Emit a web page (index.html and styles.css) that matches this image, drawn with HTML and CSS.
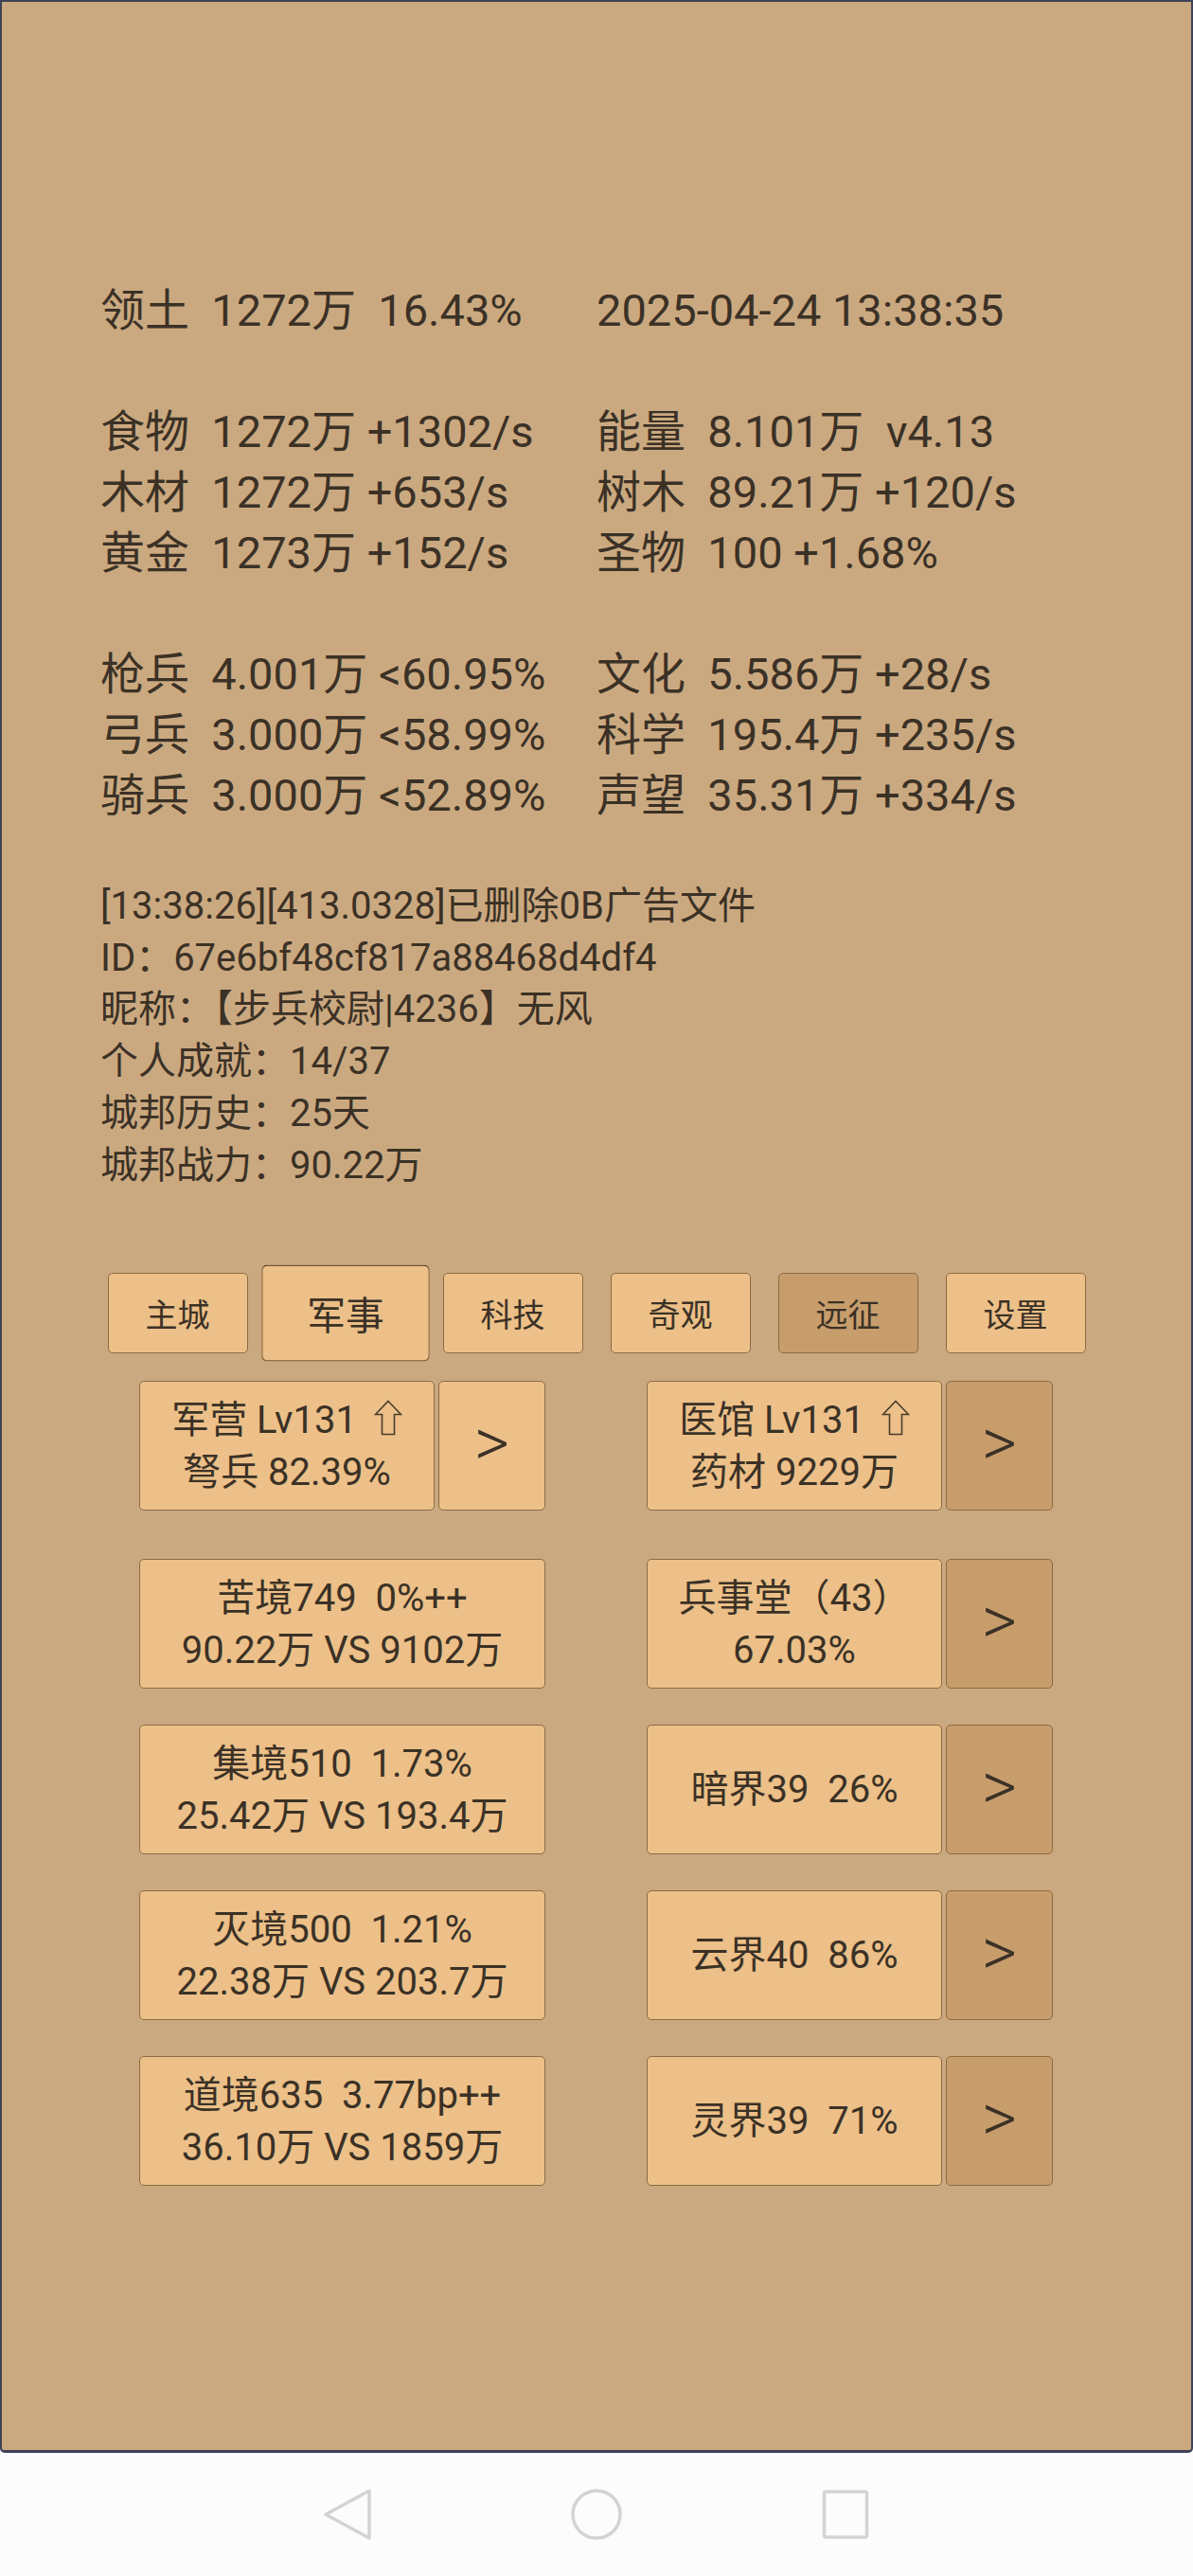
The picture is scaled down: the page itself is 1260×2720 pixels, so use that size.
FILE: index.html
```html
<!DOCTYPE html>
<html lang="zh">
<head>
<meta charset="utf-8">
<title>城邦</title>
<link rel="stylesheet" href="styles.css">
</head>
<body>
<div class="screen">
  <div class="stats">
    <div class="stat-row"><span>领土  1272万  16.43%</span><span>2025-04-24 13:38:35</span></div>
    <div class="spacer"></div>
    <div class="stat-row"><span>食物  1272万 +1302/s</span><span>能量  8.101万  v4.13</span></div>
    <div class="stat-row"><span>木材  1272万 +653/s</span><span>树木  89.21万 +120/s</span></div>
    <div class="stat-row"><span>黄金  1273万 +152/s</span><span>圣物  100 +1.68%</span></div>
    <div class="spacer"></div>
    <div class="stat-row"><span>枪兵  4.001万 &lt;60.95%</span><span>文化  5.586万 +28/s</span></div>
    <div class="stat-row"><span>弓兵  3.000万 &lt;58.99%</span><span>科学  195.4万 +235/s</span></div>
    <div class="stat-row"><span>骑兵  3.000万 &lt;52.89%</span><span>声望  35.31万 +334/s</span></div>
  </div>

  <div class="info">
    <div class="info-line">[13:38:26][413.0328]已删除0B广告文件</div>
    <div class="info-line">ID：67e6bf48cf817a88468d4df4</div>
    <div class="info-line">昵称：【步兵校尉|4236】无风</div>
    <div class="info-line">个人成就：14/37</div>
    <div class="info-line">城邦历史：25天</div>
    <div class="info-line">城邦战力：90.22万</div>
  </div>

  <div class="tabs">
    <div class="tab-cell"><div class="tab">主城</div></div>
    <div class="tab-cell"><div class="tab active">军事</div></div>
    <div class="tab-cell"><div class="tab">科技</div></div>
    <div class="tab-cell"><div class="tab">奇观</div></div>
    <div class="tab-cell"><div class="tab dark">远征</div></div>
    <div class="tab-cell"><div class="tab">设置</div></div>
  </div>

  <div class="grid">
    <div class="grid-row first">
      <div class="pair">
        <div class="card"><div class="line">军营 Lv131 <svg class="up" viewBox="0 0 30 38" width="30" height="38"><polygon points="15,1.5 28.5,15.5 21.5,15.5 21.5,36.5 8.5,36.5 8.5,15.5 1.5,15.5"/></svg></div><div class="line">弩兵 82.39%</div></div>
        <div class="arrow">&gt;</div>
      </div>
      <div class="pair">
        <div class="card"><div class="line">医馆 Lv131 <svg class="up" viewBox="0 0 30 38" width="30" height="38"><polygon points="15,1.5 28.5,15.5 21.5,15.5 21.5,36.5 8.5,36.5 8.5,15.5 1.5,15.5"/></svg></div><div class="line">药材 9229万</div></div>
        <div class="arrow dark">&gt;</div>
      </div>
    </div>
    <div class="grid-row">
      <div class="pair">
        <div class="card wide"><div class="line">苦境749  0%++</div><div class="line">90.22万 VS 9102万</div></div>
      </div>
      <div class="pair">
        <div class="card"><div class="line">兵事堂（43）</div><div class="line">67.03%</div></div>
        <div class="arrow dark">&gt;</div>
      </div>
    </div>
    <div class="grid-row">
      <div class="pair">
        <div class="card wide"><div class="line">集境510  1.73%</div><div class="line">25.42万 VS 193.4万</div></div>
      </div>
      <div class="pair">
        <div class="card"><div class="line">暗界39  26%</div></div>
        <div class="arrow dark">&gt;</div>
      </div>
    </div>
    <div class="grid-row">
      <div class="pair">
        <div class="card wide"><div class="line">灭境500  1.21%</div><div class="line">22.38万 VS 203.7万</div></div>
      </div>
      <div class="pair">
        <div class="card"><div class="line">云界40  86%</div></div>
        <div class="arrow dark">&gt;</div>
      </div>
    </div>
    <div class="grid-row">
      <div class="pair">
        <div class="card wide"><div class="line">道境635  3.77bp++</div><div class="line">36.10万 VS 1859万</div></div>
      </div>
      <div class="pair">
        <div class="card"><div class="line">灵界39  71%</div></div>
        <div class="arrow dark">&gt;</div>
      </div>
    </div>
  </div>
</div>

<div class="navbar">
  <svg class="nav-icon" viewBox="0 0 54 54" width="54" height="54"><polygon points="50,2 50,52 4,27" /></svg>
  <svg class="nav-icon" viewBox="0 0 54 54" width="54" height="54"><circle cx="27" cy="27" r="25"/></svg>
  <svg class="nav-icon" viewBox="0 0 54 54" width="54" height="54"><rect x="4.5" y="3" width="45" height="48" rx="2"/></svg>
</div>
</body>
</html>
```
FILE: styles.css
```css
* {
  box-sizing: border-box;
}

html, body {
  margin: 0;
  padding: 0;
}

body {
  width: 1260px;
  font-family: Roboto, "Noto Sans CJK SC", sans-serif;
  color: #3b3126;
  background: #fcfcfc;
}

.screen {
  height: 2590px;
  background: #cba980;
  border: 2px solid #3e4156;
  border-bottom-width: 3px;
  border-radius: 0 0 5px 5px;
  padding-top: 294px;
}

.stats {
  padding-left: 104px;
  font-size: 47px;
  line-height: 64px;
}

.stat-row {
  display: grid;
  grid-template-columns: 524px auto;
  height: 64px;
}

.stat-row span {
  white-space: pre;
}

.spacer {
  height: 64px;
}

.info {
  margin-top: 58px;
  padding-left: 104px;
  font-size: 40px;
  line-height: 54.7px;
}

.info-line {
  white-space: pre;
}

.tabs {
  margin-top: 86px;
  display: flex;
  justify-content: center;
}

.tab-cell {
  width: 177px;
  display: flex;
  justify-content: center;
}

.tab {
  width: 148px;
  height: 85px;
  background: #ecc088;
  border: 1.5px solid #8c6b43;
  border-radius: 5px;
  font-size: 34px;
  display: flex;
  align-items: center;
  justify-content: center;
}

.tab.active {
  transform: scale(1.2);
  border-color: #7a5a34;
  border-top-color: #4a3318;
}

.tab.dark {
  background: #c89d6c;
}

.grid {
  margin-top: 29px;
  margin-left: 145px;
  width: 965px;
  display: flex;
  flex-direction: column;
  gap: 38px;
}

.grid-row {
  display: flex;
  gap: 107px;
  height: 137px;
}

.grid-row.first {
  margin-bottom: 13px;
}

.pair {
  width: 429px;
  display: flex;
  gap: 4px;
}

.card {
  width: 312px;
  height: 137px;
  background: #ecc088;
  border: 1.5px solid #8c6b43;
  border-radius: 5px;
  display: flex;
  flex-direction: column;
  align-items: center;
  justify-content: center;
  font-size: 40px;
  line-height: 55px;
}

.card .line {
  white-space: pre;
}

.card.wide {
  width: 429px;
}

.up {
  margin-left: 8px;
  vertical-align: -3px;
  fill: none;
  stroke: #4a3c2b;
  stroke-width: 1.6;
  stroke-linejoin: miter;
}

.arrow {
  width: 113px;
  height: 137px;
  background: #ecc088;
  border: 1.5px solid #8c6b43;
  border-radius: 5px;
  display: flex;
  align-items: center;
  justify-content: center;
  font-size: 72px;
  font-weight: 300;
  line-height: 1;
  padding-bottom: 6px;
}

.arrow.dark {
  background: #c89d6c;
}

.navbar {
  height: 130px;
  background: #fcfcfc;
  display: flex;
  justify-content: center;
  align-items: center;
  gap: 209px;
}

.nav-icon {
  fill: none;
  stroke: #d3d3d3;
  stroke-width: 3.5;
  stroke-linejoin: round;
}
```
